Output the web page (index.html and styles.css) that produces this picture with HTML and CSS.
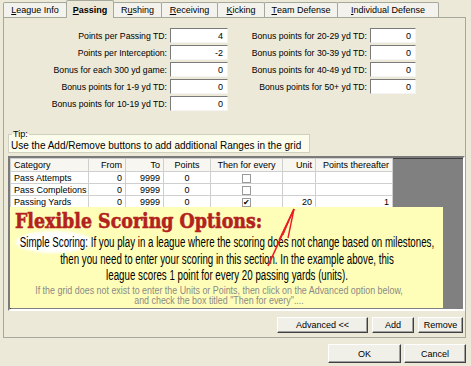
FILE: index.html
```html
<!DOCTYPE html>
<html lang="en">
<head>
    <meta charset="UTF-8">
    <title>Passing Scoring</title>
    <link rel="stylesheet" href="styles.css">
</head>
<body>

    <div class="dialog">
        <div class="tabs">
            <div class="tab w-league"><u>L</u>eague Info</div>
            <div class="tab w-passing active"><u>P</u>assing</div>
            <div class="tab w-rushing">R<u>u</u>shing</div>
            <div class="tab w-receiving"><u>R</u>eceiving</div>
            <div class="tab w-kicking"><u>K</u>icking</div>
            <div class="tab w-team"><u>T</u>eam Defense</div>
            <div class="tab w-indiv"><u>I</u>ndividual Defense</div>
        </div>

        <div class="panel">
            <div class="fields">
                <div class="col col-left">
                    <div class="field"><label>Points per Passing TD:</label><input type="text" value="4"></div>
                    <div class="field"><label>Points per Interception:</label><input type="text" value="-2"></div>
                    <div class="field"><label>Bonus for each 300 yd game:</label><input type="text" value="0"></div>
                    <div class="field"><label>Bonus points for 1-9 yd TD:</label><input type="text" value="0"></div>
                    <div class="field"><label>Bonus points for 10-19 yd TD:</label><input type="text" value="0"></div>
                </div>
                <div class="col col-right">
                    <div class="field"><label>Bonus points for 20-29 yd TD:</label><input type="text" value="0"></div>
                    <div class="field"><label>Bonus points for 30-39 yd TD:</label><input type="text" value="0"></div>
                    <div class="field"><label>Bonus points for 40-49 yd TD:</label><input type="text" value="0"></div>
                    <div class="field"><label>Bonus points for 50+ yd TD:</label><input type="text" value="0"></div>
                </div>
            </div>

            <fieldset class="tip">
                <legend>Tip:</legend>
                Use the Add/Remove buttons to add additional Ranges in the grid
            </fieldset>

            <div class="grid">
                <table class="ranges">
                    <tr>
                        <th class="c-cat">Category</th>
                        <th class="c-from num">From</th>
                        <th class="c-to num">To</th>
                        <th class="c-pts mid">Points</th>
                        <th class="c-every mid">Then for every</th>
                        <th class="c-unit num">Unit</th>
                        <th class="c-after num">Points thereafter</th>
                    </tr>
                    <tr>
                        <td>Pass Attempts</td>
                        <td class="num">0</td>
                        <td class="num">9999</td>
                        <td class="mid">0</td>
                        <td class="mid"><span class="check"></span></td>
                        <td class="num"></td>
                        <td class="num"></td>
                    </tr>
                    <tr>
                        <td>Pass Completions</td>
                        <td class="num">0</td>
                        <td class="num">9999</td>
                        <td class="mid">0</td>
                        <td class="mid"><span class="check"></span></td>
                        <td class="num"></td>
                        <td class="num"></td>
                    </tr>
                    <tr>
                        <td>Passing Yards</td>
                        <td class="num">0</td>
                        <td class="num">9999</td>
                        <td class="mid">0</td>
                        <td class="mid"><span class="check checked">&#10004;</span></td>
                        <td class="num">20</td>
                        <td class="num">1</td>
                    </tr>
                </table>

                <div class="note">
                    <h1>Flexible Scoring Options:</h1>
                    <p class="note-text">
                        <span class="hilite">Simple Scoring:</span> If you play in a league where the scoring does not change based on milestones,<br>
                        then you need to enter your scoring in this section. In the example above, this<br>
                        league scores 1 point for every 20 passing yards (units).
                    </p>
                    <p class="note-small">
                        If the grid does not exist to enter the Units or Points, then click on the Advanced option below,<br>
                        and check the box titled "Then for every"....
                    </p>
                </div>

                <!-- hand drawn arrow pointing at the Unit cell -->
                <svg class="arrow" width="40" height="64" viewBox="0 0 40 64">
                    <path d="M30 1 L4 58" stroke="#ec1b24" stroke-width="1.6" fill="none"/>
                    <path d="M30 1 L15 32" stroke="#ec1b24" stroke-width="1.4" fill="none"/>
                    <path d="M30 1 L24 30" stroke="#ec1b24" stroke-width="1.4" fill="none"/>
                    <path d="M29 3 L19 27" stroke="#ec1b24" stroke-width="1" fill="none"/>
                </svg>
            </div>

            <div class="grid-buttons">
                <button class="btn-adv">Advanced &lt;&lt;</button>
                <button class="btn-add">Add</button>
                <button class="btn-remove">Remove</button>
            </div>
        </div>

        <div class="dialog-buttons">
            <button class="btn-ok">OK</button>
            <button class="btn-cancel">Cancel</button>
        </div>
    </div>

</body>
</html>
```

FILE: styles.css
```css
* {
    box-sizing: border-box;
}

body {
    margin: 0;
    width: 471px;
    height: 366px;
    overflow: hidden;
    background-color: #ece9d8;
    font-family: "Liberation Sans", Arial, sans-serif;
    font-size: 9px;
    color: #000;
}

.dialog {
    display: flex;
    flex-direction: column;
}

/* tab strip */
.tabs {
    display: flex;
    align-items: flex-end;
    height: 17px;
    padding-left: 3px;
    position: relative;
    z-index: 1;
}

.tab {
    height: 15px;
    display: flex;
    align-items: center;
    justify-content: center;
    border: 1px solid #a5a99c;
    border-bottom: none;
    border-radius: 2px 2px 0 0;
    background-color: #f3f2ec;
    margin-right: -1px;
    white-space: nowrap;
}

.tab.active {
    height: 18px;
    margin-bottom: -1px;
    font-weight: bold;
    background-color: #ece9d8;
}

.w-league { width: 64px; }
.w-passing { width: 48px; }
.w-rushing { width: 49px; }
.w-receiving { width: 57px; }
.w-kicking { width: 48px; }
.w-team { width: 74px; }
.w-indiv { width: 102px; }

/* tab page */
.panel {
    height: 321px;
    margin: 0 5px 0 3px;
    border: 1px solid #a5a99c;
    display: flex;
    flex-direction: column;
}

.fields {
    display: flex;
    padding-top: 10px;
    font-size: 8.7px;
}

.col {
    display: flex;
    flex-direction: column;
    gap: 2px;
}

.col-right {
    margin-left: 9px;
}

.field {
    display: flex;
    align-items: center;
    gap: 3px;
    height: 15px;
}

.field label {
    text-align: right;
    white-space: nowrap;
}

.col-left label { width: 163px; }
.col-right label { width: 130px; }

.field input {
    height: 15px;
    padding: 0 4px;
    font-family: inherit;
    font-size: 9px;
    text-align: right;
    background-color: #fff;
    border: 1px solid;
    border-color: #7a7a7a #f4f4f4 #f4f4f4 #7a7a7a;
}

.col-left input { width: 58px; }
.col-right input { width: 46px; }

.tip {
    width: 302px;
    margin: 18px 0 0 4px;
    padding: 0 2px 1px;
    border: 1px solid #d0d0bf;
    background-color: #fcfcec;
    font-size: 10px;
    line-height: 11px;
}

.tip legend {
    padding: 0 1px;
    margin-left: 1px;
    font-size: 9px;
}

/* grid with the pasted note */
.grid {
    position: relative;
    height: 155px;
    margin: 3px 0 0 4px;
    width: 457px;
    background-color: #808080;
    border: 2px solid;
    border-color: #7a7a7a #ffffff #ffffff #7a7a7a;
    box-shadow: inset 1px 1px 0 #404040;
}

.ranges {
    border-collapse: collapse;
    background-color: #fff;
    table-layout: fixed;
    width: 382px;
}

.ranges th,
.ranges td {
    height: 12px;
    padding: 0 3px;
    border: 1px solid #cfcfcf;
    font-weight: normal;
    white-space: nowrap;
    line-height: 10px;
}

.ranges th {
    height: 13px;
    background-color: #f7f6f1;
    text-align: left;
}

.ranges .num { text-align: right; }
.ranges .mid { text-align: center; }

.c-cat { width: 78px; }
.c-from { width: 37px; }
.c-to { width: 38px; }
.c-pts { width: 47px; }
.c-every { width: 72px; }
.c-unit { width: 33px; }
.c-after { width: 77px; }

.check {
    display: inline-block;
    width: 9px;
    height: 9px;
    border: 1px solid #9a9a9a;
    background-color: #fff;
    font-size: 8px;
    line-height: 7px;
    vertical-align: middle;
}

.note {
    width: 433px;
    height: 101px;
    margin-top: -1px;
    background-color: #fefeb9;
    padding: 3px 5px 0;
}

.note h1 {
    margin: 0;
    font-family: "DejaVu Serif", "Liberation Serif", serif;
    font-weight: bold;
    font-size: 21px;
    line-height: 22px;
    color: #b3221d;
    -webkit-text-stroke: 0.6px #b3221d;
    white-space: nowrap;
    transform: scaleX(0.83);
    transform-origin: 0 0;
}

/* the note was set in a narrow face, so squeeze the regular one */
.note-text {
    width: 620px;
    margin: 2px 0 0 -98px;
    text-align: center;
    white-space: nowrap;
    font-family: "Liberation Sans", Arial, sans-serif;
    font-size: 14px;
    line-height: 16.5px;
    transform: scaleX(0.695);
    transform-origin: 50% 0;
}

.hilite {
    background-color: #fff;
    border-radius: 50%;
    padding: 1px 4px;
    margin: 0 -4px;
    box-shadow: 0 0 3px 2px #fff;
}

.note-small {
    width: 480px;
    margin: 2px 0 0 -36px;
    text-align: center;
    white-space: nowrap;
    font-size: 10px;
    line-height: 10.5px;
    color: #8a8a84;
    transform: scaleX(0.89);
    transform-origin: 50% 0;
}

.arrow {
    position: absolute;
    left: 254px;
    top: 50px;
}

/* buttons */
button {
    height: 16px;
    padding: 0;
    font-family: inherit;
    font-size: 9px;
    color: #000;
    background-color: #f0efe8;
    border: 1px solid;
    border-color: #ffffff #404040 #404040 #ffffff;
    box-shadow: inset -1px -1px 0 #a0a0a0;
}

.grid-buttons {
    display: flex;
    justify-content: flex-end;
    gap: 4px;
    margin-top: 6px;
    padding-right: 2px;
}

.btn-adv { width: 91px; }
.btn-add { width: 42px; }
.btn-remove { width: 45px; }

.dialog-buttons {
    display: flex;
    justify-content: flex-end;
    gap: 3px;
    margin-top: 6px;
    padding-right: 5px;
}

.dialog-buttons button {
    height: 19px;
}

.btn-ok { width: 73px; }
.btn-cancel { width: 62px; }
```
